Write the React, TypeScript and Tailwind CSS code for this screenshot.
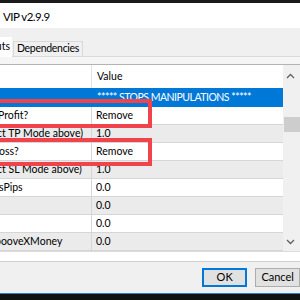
import React from "react";

type Row = { name: string; value: string; shift: number; bg: string };

const rows: Row[] = [
  { name: "Profit?", value: "Remove", shift: -2, bg: "bg-white" },
  { name: "ct  TP Mode above)", value: "1.0", shift: -3, bg: "bg-[#ebebeb]" },
  { name: "oss?", value: "Remove", shift: -1, bg: "bg-white" },
  { name: "ct  SL Mode above)", value: "1.0", shift: -3, bg: "bg-[#ebebeb]" },
  { name: "sPips", value: "0.0", shift: -1, bg: "bg-white" },
  { name: "", value: "0.0", shift: 0, bg: "bg-[#ebebeb]" },
  { name: "", value: "0.0", shift: 0, bg: "bg-white" },
  { name: "booveXMoney", value: "0.0", shift: -5, bg: "bg-[#ebebeb]" },
];

const Chevron = ({ up }: { up?: boolean }) => (
  <svg width="9" height="6" viewBox="0 0 9 6" className="block">
    <path
      d={up ? "M1 5 L4.5 1.5 L8 5" : "M1 1 L4.5 4.5 L8 1"}
      fill="none"
      stroke="#606060"
      strokeWidth="1.3"
    />
  </svg>
);

export default function App() {
  return (
    <div
      className="relative w-[300px] h-[300px] overflow-hidden bg-[#f0f0f0] text-[10.5px] text-black flex flex-col"
      style={{ fontFamily: 'Lato, "Noto Sans", sans-serif' }}
    >
      {/* window top edge */}
      <div className="h-[3px] bg-[#1b1b1b] shrink-0" />

      {/* title bar */}
      <div className="h-[25px] bg-white flex items-center pl-[3px] pt-[3px] text-[11.5px] tracking-[-0.5px] shrink-0">
        VIP v2.9.9
      </div>

      {/* tabs */}
      <div className="h-[29px] flex items-end shrink-0 border-b border-[#d9d9d9]">
        <div className="w-[12px] h-[20px] bg-white overflow-hidden flex justify-end items-center pr-[2px] -mb-px">
          <span className="whitespace-nowrap">Inputs</span>
        </div>
        <div className="h-[15px] px-[3px] flex items-center bg-[#f0f0f0] border border-b-0 border-[#d9d9d9] ml-px tracking-[-0.3px]">
          Dependencies
        </div>
      </div>

      {/* panel gap */}
      <div className="h-[7px] bg-[#f5f5f5] shrink-0" />

      {/* grid + scrollbar */}
      <div className="flex border-t border-[#b4b4b4] shrink-0">
        <div className="w-[289px] flex flex-col">
          <div className="h-[23px] bg-white flex">
            <div className="w-[92px] border-r border-[#e3e3e3]" />
            <div className="flex-1 pl-[5px] flex items-end pb-[3px]">Value</div>
          </div>
          <div className="h-[19px] bg-[#0078d7] text-white flex items-center pl-[97px] whitespace-nowrap tracking-[-0.5px]">
            ***** STOPS MANIPULATIONS *****
          </div>
          {rows.map((r, i) => (
            <div key={i} className={`h-[18px] flex border-b border-[#d6d6d6] ${r.bg}`}>
              <div className="w-[92px] border-r border-[#d6d6d6] overflow-hidden flex items-center">
                <span className="whitespace-nowrap" style={{ marginLeft: r.shift }}>
                  {r.name}
                </span>
              </div>
              <div className="flex-1 pl-[4px] flex items-center">{r.value}</div>
            </div>
          ))}
        </div>
        <div className="w-[17px] bg-[#f0f0f0] flex flex-col pt-[8px] pb-[6px]">
          <div className="flex justify-center pr-[3px]">
            <Chevron up />
          </div>
          <div className="h-[15px] bg-[#cdcdcd] mt-[38px] ml-[1px]" />
          <div className="flex-1" />
          <div className="flex justify-center pr-[3px]">
            <Chevron />
          </div>
        </div>
      </div>

      {/* description strip */}
      <div className="h-[11px] bg-white border-t border-[#dcdcdc] border-b border-b-[#cfcfcf] shrink-0" />

      {/* buttons */}
      <div className="flex-1 flex items-start pt-[6px] pl-[202px] gap-[8px]">
        <div className="w-[65px] h-[19px] bg-[#e1e1e1] border-2 border-[#0078d7] flex items-center justify-center text-[11px]">
          OK
        </div>
        <div className="w-[65px] h-[19px] bg-[#e1e1e1] border border-[#adadad] flex items-center justify-center text-[11px]">
          Cancel
        </div>
      </div>

      {/* taskbar edge */}
      <div className="h-[7px] bg-[#121212] border-t border-[#2f7fd6] shrink-0" />

      {/* red annotation boxes */}
      <div className="absolute left-[-8px] top-[99px] w-[160px] h-[29px] border-4 border-[#f0434b]" />
      <div className="absolute left-[-8px] top-[138px] w-[160px] h-[28px] border-4 border-[#f0434b]" />
    </div>
  );
}
